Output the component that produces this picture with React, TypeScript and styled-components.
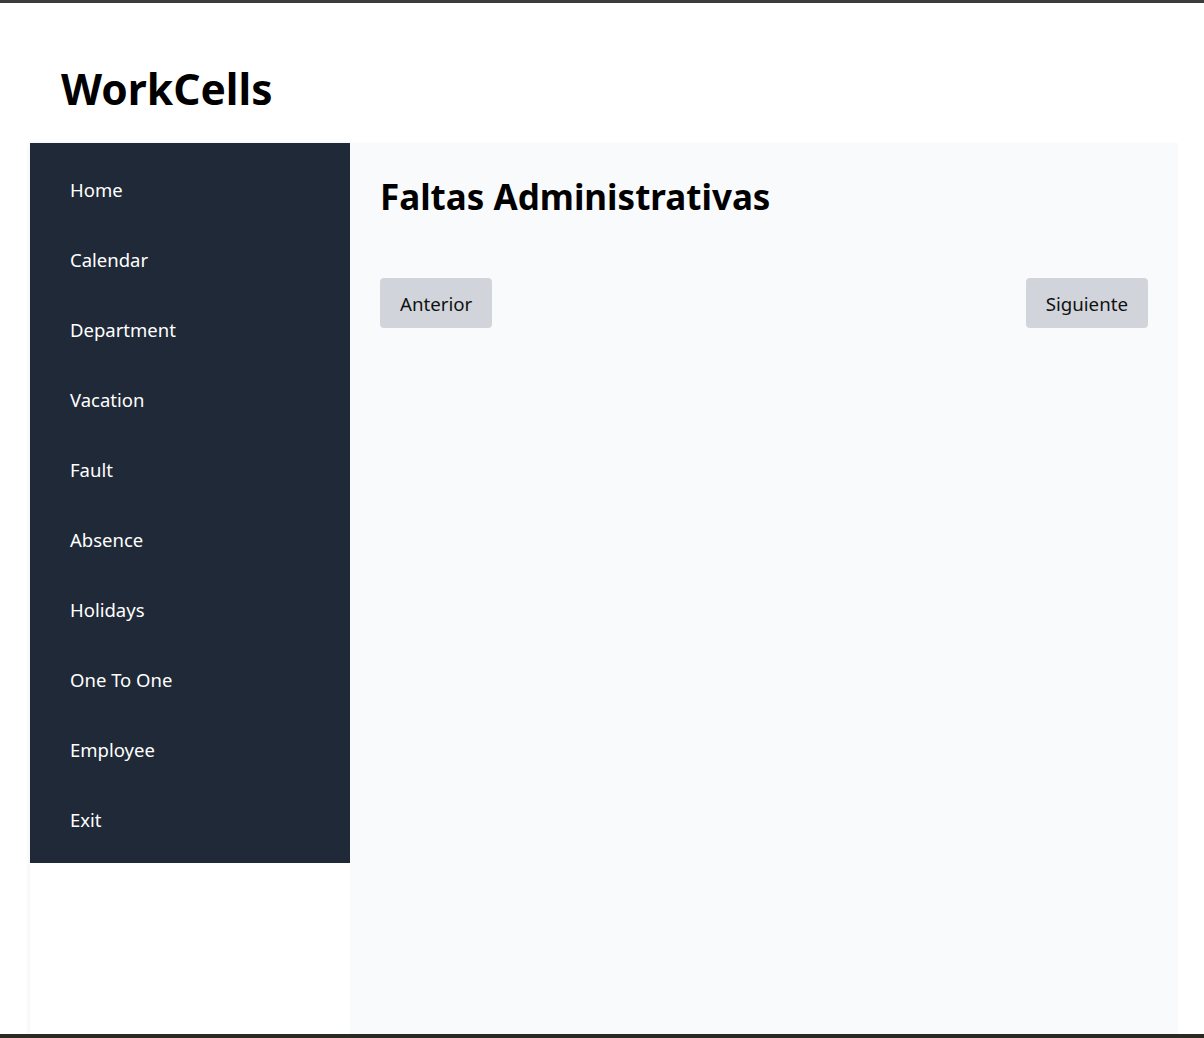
import React from "react";
import styled, { createGlobalStyle } from "styled-components";

const Global = createGlobalStyle`
  html, body { margin: 0; padding: 0; background: #ffffff; }
  body { font-family: "Segoe UI", "Noto Sans", "Open Sans", sans-serif; }
  * { box-sizing: border-box; }
`;

const Frame = styled.div`
  height: 100vh;
  display: flex;
  flex-direction: column;
  overflow: hidden;
`;

const TopEdge = styled.div`
  height: 3px;
  flex: none;
  background: #3c3c3c;
`;

const BottomEdge = styled.div`
  height: 4px;
  flex: none;
  background: #2b2a21;
`;

const Page = styled.div`
  flex: 1;
  min-height: 0;
  display: flex;
  flex-direction: column;
  padding: 0 26px 0 30px;
`;

const Header = styled.header`
  height: 140px;
  flex: none;
  display: flex;
  align-items: flex-start;
  padding: 65px 0 0 31px;
`;

const Brand = styled.h1`
  margin: 0;
  font-size: 42.5px;
  line-height: 1;
  font-weight: 700;
  color: #000;
`;

const Body = styled.div`
  flex: 1;
  min-height: 0;
  display: flex;
`;

const Sidebar = styled.aside`
  width: 320px;
  flex: none;
  background: #ffffff;
  box-shadow: 0 1px 6px rgba(0, 0, 0, 0.08);
`;

const Nav = styled.nav`
  background: #1f2937;
  padding: 10px 0;
  display: flex;
  flex-direction: column;
`;

const NavItem = styled.a`
  height: 70px;
  display: flex;
  align-items: center;
  padding: 2px 0 0 40px;
  color: #ffffff;
  font-size: 18.5px;
  text-decoration: none;
  cursor: pointer;
`;

const Main = styled.main`
  flex: 1;
  background: #f9fafb;
  padding: 30px 30px;
`;

const Title = styled.h2`
  margin: 0 0 57px 0;
  font-size: 35px;
  line-height: 48px;
  font-weight: 700;
  color: #000;
`;

const Pager = styled.div`
  display: flex;
  justify-content: space-between;
  align-items: center;
`;

const PageButton = styled.button`
  height: 50px;
  padding: 0 20px;
  border: none;
  border-radius: 4px;
  background: #d1d5db;
  color: #111;
  font-family: inherit;
  font-size: 18.7px;
  cursor: pointer;
`;

const items = [
  "Home",
  "Calendar",
  "Department",
  "Vacation",
  "Fault",
  "Absence",
  "Holidays",
  "One To One",
  "Employee",
  "Exit",
];

export default function App() {
  return (
    <>
      <Global />
      <Frame>
        <TopEdge />
        <Page>
          <Header>
            <Brand>WorkCells</Brand>
          </Header>
          <Body>
            <Sidebar>
              <Nav>
                {items.map((i) => (
                  <NavItem key={i}>{i}</NavItem>
                ))}
              </Nav>
            </Sidebar>
            <Main>
              <Title>Faltas Administrativas</Title>
              <Pager>
                <PageButton>Anterior</PageButton>
                <PageButton>Siguiente</PageButton>
              </Pager>
            </Main>
          </Body>
        </Page>
        <BottomEdge />
      </Frame>
    </>
  );
}
